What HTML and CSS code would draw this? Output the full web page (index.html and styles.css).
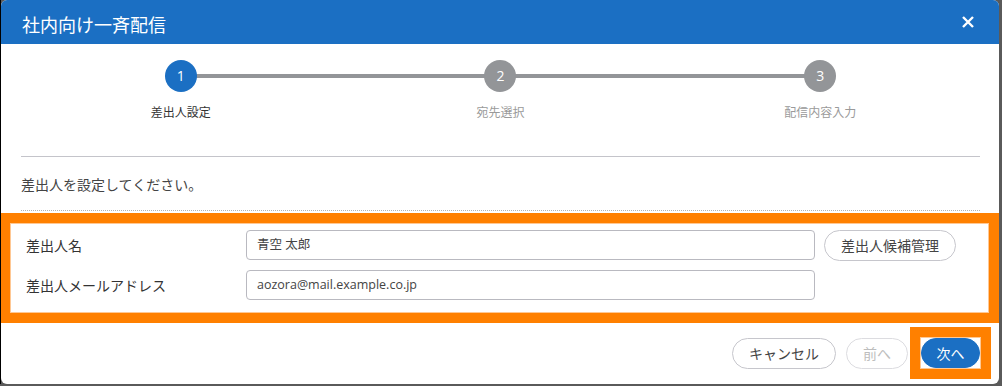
FILE: index.html
```html
<!DOCTYPE html>
<html lang="ja">
<head>
  <meta charset="UTF-8">
  <title>社内向け一斉配信</title>
  <link rel="stylesheet" href="styles.css">
</head>
<body>

<div class="dialogo">
  <div class="cabecera">
    <span class="titulo">社内向け一斉配信</span>
    <svg class="cerrar" viewBox="0 0 12 12" width="12" height="12">
      <path d="M1 1 L11 11 M11 1 L1 11" />
    </svg>
  </div>

  <div class="cuerpo">
    <!-- pasos -->
    <div class="pasos">
      <div class="linea"></div>
      <div class="paso activo">
        <span class="num">1</span>
        <span class="etiqueta">差出人設定</span>
      </div>
      <div class="paso">
        <span class="num">2</span>
        <span class="etiqueta">宛先選択</span>
      </div>
      <div class="paso">
        <span class="num">3</span>
        <span class="etiqueta">配信内容入力</span>
      </div>
    </div>

    <p class="guia">差出人を設定してください。</p>
  </div>

  <!-- formulario -->
  <div class="marco-form">
    <div class="fila">
      <label class="rotulo">差出人名</label>
      <div class="campo">青空 太郎</div>
      <button class="boton">差出人候補管理</button>
    </div>
    <div class="fila">
      <label class="rotulo">差出人メールアドレス</label>
      <div class="campo">aozora@mail.example.co.jp</div>
    </div>
  </div>

  <div class="pie">
    <button class="boton">キャンセル</button>
    <button class="boton desactivado">前へ</button>
    <div class="marco-siguiente">
      <button class="boton primario">次へ</button>
    </div>
  </div>
</div>

</body>
</html>
```

FILE: styles.css
```css
body {
  margin: 0;
  background-color: #5a5a5a;
  border-left: 1px solid #000;
  font-family: "Open Sans", "Noto Sans CJK JP", sans-serif;
  color: #333;
}

.dialogo {
  width: 998px;
  height: 384px;
  background-color: #fff;
  border-radius: 6px;
  box-sizing: border-box;
}

.cabecera {
  height: 44px;
  box-sizing: border-box;
  padding: 3px 25px 0 21px;
  background-color: #1b6fc3;
  border-radius: 6px 6px 0 0;
  display: flex;
  align-items: center;
  justify-content: space-between;
}

.titulo {
  color: #fff;
  font-family: "Noto Sans CJK JP", sans-serif;
  font-size: 18px;
  line-height: 24px;
}

.cerrar {
  margin-top: -3px;
}

.cerrar path {
  stroke: #fff;
  stroke-width: 2.4;
  fill: none;
}

.cuerpo {
  padding: 0 19px 0 20px;
}

.pasos {
  position: relative;
  display: grid;
  grid-template-columns: repeat(3, 1fr);
  padding-top: 16px;
}

.linea {
  position: absolute;
  top: 30px;
  left: 160px;
  right: 160px;
  height: 4px;
  background-color: #939598;
}

.paso {
  position: relative;
  display: flex;
  flex-direction: column;
  align-items: center;
  gap: 11px;
}

.num {
  width: 32px;
  height: 32px;
  border-radius: 50%;
  background-color: #939598;
  color: #fff;
  font-size: 14px;
  line-height: 32px;
  text-align: center;
}

.etiqueta {
  font-family: "Noto Sans CJK JP", sans-serif;
  font-size: 12px;
  line-height: 17px;
  color: #9a9a9a;
}

.paso.activo .num {
  background-color: #1b6fc3;
}

.paso.activo .etiqueta {
  color: #333;
}

.guia {
  margin: 36px 0 0;
  padding: 17px 0 16px;
  border-top: 1px solid #c4c4ca;
  border-bottom: 1px dotted #b4b4b4;
  font-family: "Noto Sans CJK JP", sans-serif;
  font-size: 14px;
  line-height: 20px;
  color: #444;
}

.marco-form {
  margin: 2px 0 0 -1px;
  width: 999px;
  box-sizing: border-box;
  border: 10px solid #ff8000;
  box-shadow: inset 0 0 0 1px #ffc894;
  padding: 7px 0 13px 16px;
  display: flex;
  flex-direction: column;
  gap: 10px;
}

.fila {
  display: flex;
  align-items: center;
  height: 30px;
}

.rotulo {
  width: 220px;
  font-family: "Noto Sans CJK JP", sans-serif;
  font-size: 14px;
  line-height: 20px;
  color: #333;
}

.campo {
  width: 569px;
  height: 30px;
  box-sizing: border-box;
  border: 1px solid #b9b9c0;
  border-radius: 4px;
  padding: 0 10px;
  font-size: 12.5px;
  line-height: 28px;
  color: #444;
}

.fila .boton {
  margin-left: 9px;
}

.boton {
  height: 31px;
  box-sizing: border-box;
  padding: 0 16px;
  border: 1px solid #c6c6cc;
  border-radius: 16px;
  background-color: #fff;
  font-family: "Noto Sans CJK JP", sans-serif;
  font-size: 14px;
  line-height: 29px;
  color: #444;
}

.boton.desactivado {
  color: #bdbdbd;
  border-color: #dcdce0;
}

.boton.primario {
  height: 30px;
  width: 59px;
  padding: 0;
  background-color: #1b6fc3;
  border-color: #1b6fc3;
  color: #fff;
}

.pie {
  display: flex;
  justify-content: flex-end;
  align-items: center;
  padding: 4px 8px 5px 0;
}

.pie .boton + .boton {
  margin-left: 10px;
}

.marco-siguiente {
  margin-left: 2px;
  border: 10px solid #ff8000;
  box-shadow: inset 0 0 0 1px #ffc894;
  padding: 1px;
  display: flex;
}
```
